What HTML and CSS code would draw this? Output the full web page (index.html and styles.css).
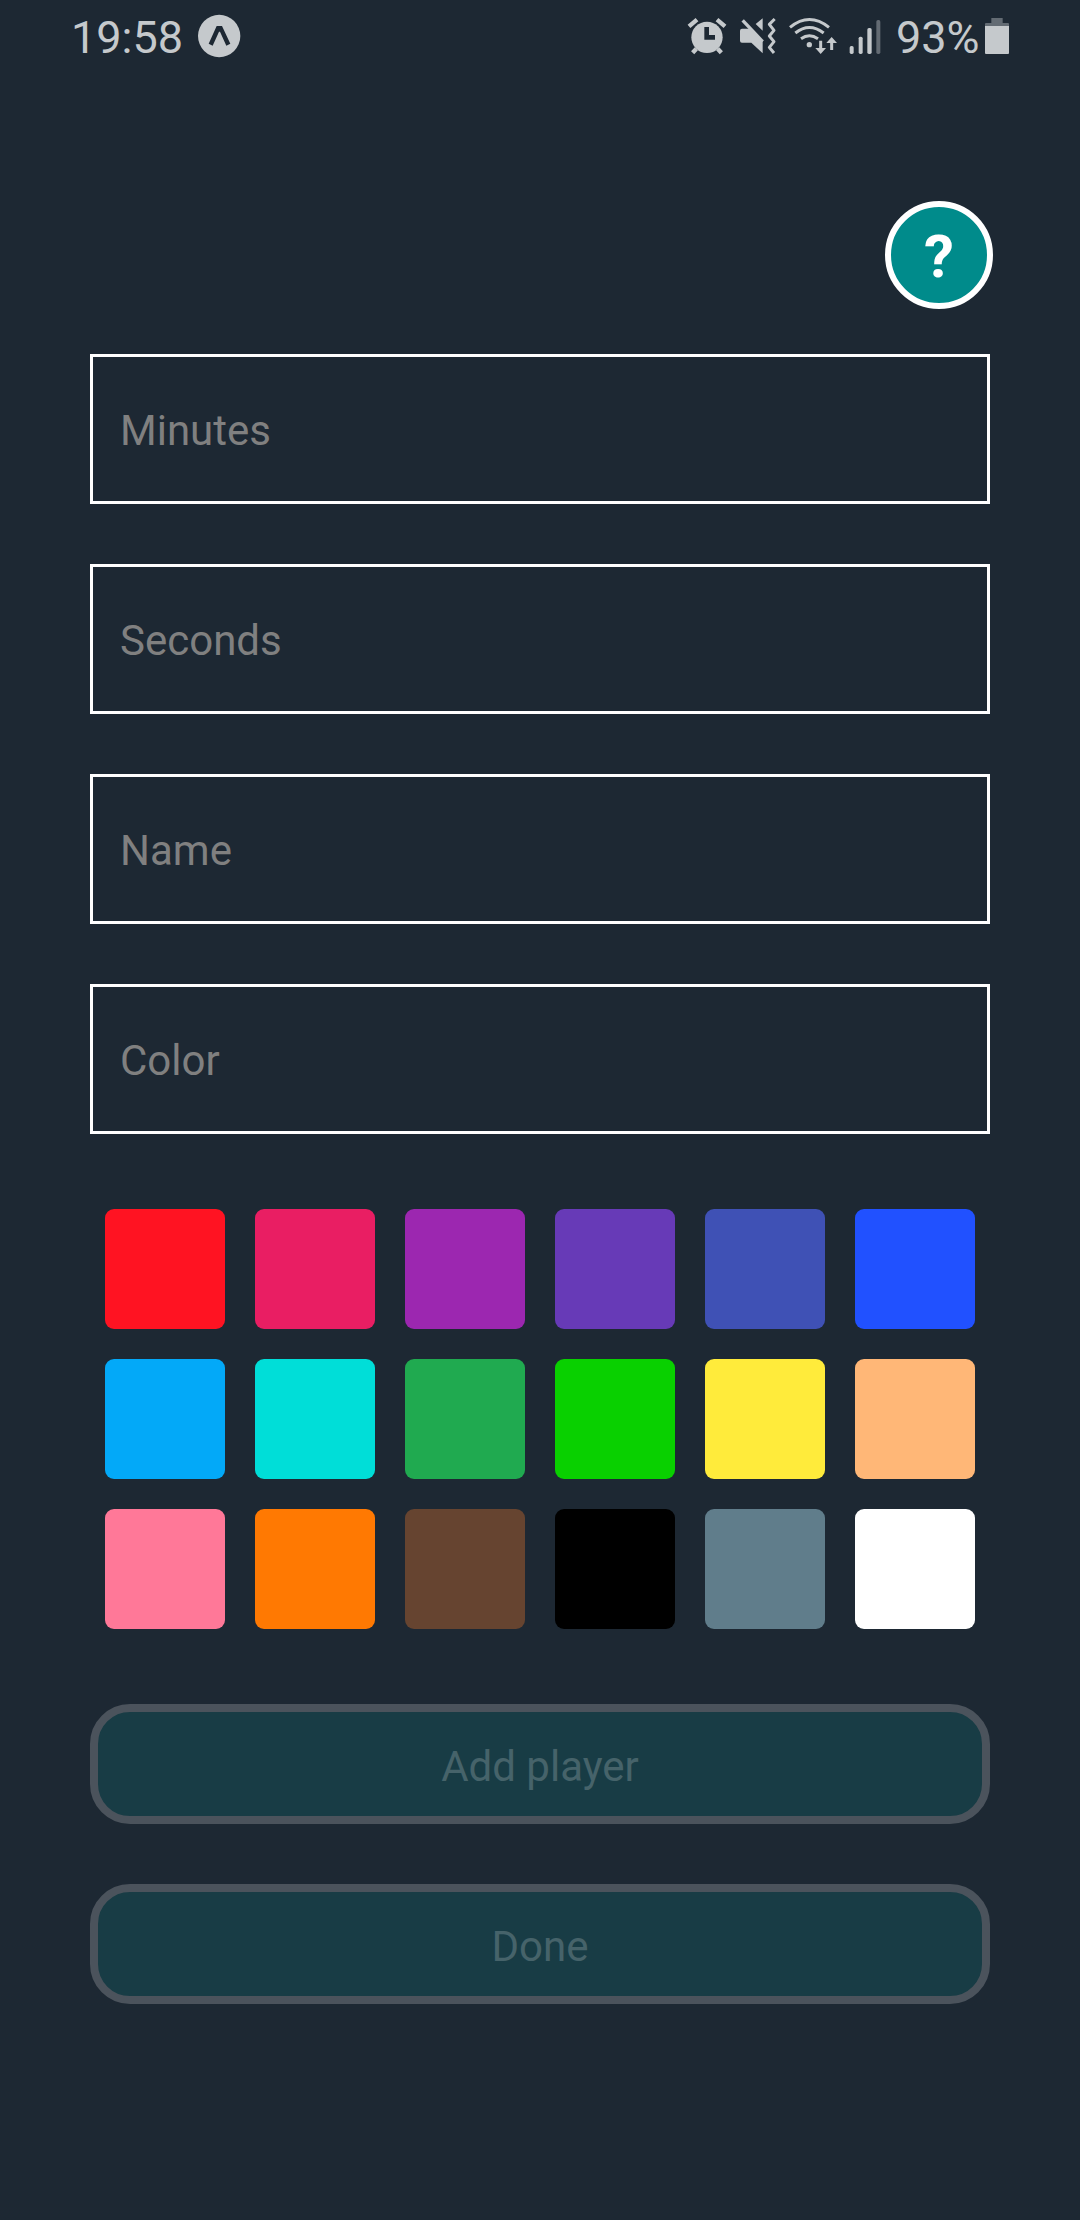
FILE: index.html
```html
<!DOCTYPE html>
<html lang="en">
<head>
<meta charset="utf-8">
<title>Add players</title>
<link rel="stylesheet" href="styles.css">
</head>
<body>
<header class="status">
  <span class="time">19:58</span>
  <svg class="app" width="44" height="75" viewBox="411 0 132 225">
    <circle cx="477.500" cy="108" r="63.500" fill="currentColor"/>
    <path class="cut" d="M470 78h16l25 53-12 6-19-42h-3l-19 42-12-6z"/>
  </svg>
  <div class="indicators">
    <svg class="alarm" width="40" height="75" viewBox="51 0 120 225">
      <circle cx="111" cy="112" r="47" fill="currentColor"/>
      <path d="M57 79l24-20M165 79l-24-20" stroke="currentColor" stroke-width="13"/>
      <path d="M79 146l-11 12M143 146l11 12" stroke="currentColor" stroke-width="13"/>
      <path class="cut" d="M103 81h14v24h18v14h-32z"/>
    </svg>
    <svg class="mute" width="38" height="75" viewBox="207 0 114 225">
      <path d="M216 86h25l37 37v37l-34-32h-28q-6 0-6-6V92q0-6 6-6zM278 55v37l-21-20z" fill="currentColor"/>
      <path d="M218 61l60 64" stroke="currentColor" stroke-width="10"/>
      <path d="M314 57l-16 16 14 18-14 17 14 17-14 17 14 17" fill="none" stroke="currentColor" stroke-width="9" stroke-linejoin="round"/>
    </svg>
    <svg class="wifi" width="50" height="75" viewBox="354 0 150 225">
      <g fill="none" stroke="currentColor" stroke-width="9">
        <path d="M360 82q58-47 117 0M376 99q42-33 85 0M393 116q25-18 51 0"/>
        <path d="M452 122v30M485 150v-30"/>
      </g>
      <circle cx="418" cy="134" r="8" fill="currentColor"/>
      <path d="M436 144h32l-16 18zM469 129h32l-16-18z" fill="currentColor"/>
    </svg>
    <svg class="signal" width="34" height="75" viewBox="24 0 102 225" fill="currentColor">
      <rect x="29" y="138" width="12" height="24" rx="5"/>
      <rect x="56" y="110" width="12" height="52" rx="5"/>
      <rect x="82" y="84" width="13" height="78" rx="5"/>
      <rect x="109" y="60" width="12" height="102" rx="5" opacity=".42"/>
    </svg>
    <span class="percent">93%</span>
    <svg class="battery" width="26" height="75" viewBox="432 0 78 225" fill="currentColor">
      <path d="M435 78v-6q0-3 3-3h16V54h34v15h16q3 0 3 3v6z" opacity=".42"/>
      <path d="M435 78h72v81q0 3-3 3h-66q-3 0-3-3z"/>
    </svg>
  </div>
</header>
<main class="screen">
  <button class="help">?</button>
  <form class="form">
    <div class="field">Minutes</div>
    <div class="field">Seconds</div>
    <div class="field">Name</div>
    <div class="field">Color</div>
  </form>
  <div class="palette">
    <i class="swatch red"></i><i class="swatch pink"></i><i class="swatch purple"></i><i class="swatch violet"></i><i class="swatch indigo"></i><i class="swatch blue"></i>
    <i class="swatch sky"></i><i class="swatch cyan"></i><i class="swatch green"></i><i class="swatch lime"></i><i class="swatch yellow"></i><i class="swatch peach"></i>
    <i class="swatch rose"></i><i class="swatch orange"></i><i class="swatch brown"></i><i class="swatch black"></i><i class="swatch slate"></i><i class="swatch white"></i>
  </div>
  <div class="actions">
    <button class="action">Add player</button>
    <button class="action">Done</button>
  </div>
</main>
</body>
</html>
```
FILE: styles.css
```css
* { box-sizing: border-box; }
body {
  margin: 0;
  min-height: 2220px;
  background: #1d2833;
  font-family: Roboto, "Liberation Sans", sans-serif;
  font-size: 42px;
}
button { font: inherit; }
svg { display: block; flex: none; }
.status {
  display: flex;
  height: 75px;
  padding: 0 70px 0 71px;
  color: #c5c9cc;
  font-size: 45px;
  line-height: 75px;
}
.time { width: 126px; }
.cut { fill: #1d2833; }
.indicators { display: flex; margin-left: auto; }
.mute { margin-left: 12px; }
.wifi { margin-left: 11px; }
.signal { margin-left: 10px; }
.percent { width: 88px; margin-left: 14px; }
.screen {
  display: flex;
  flex-direction: column;
  padding: 126px 90px 0;
}
.help {
  align-self: flex-end;
  width: 108px;
  height: 108px;
  margin: 0 -3px 45px 0;
  padding: 4px 0 0;
  border: 6px solid #fff;
  border-radius: 50%;
  background: #008b8b;
  color: #fff;
  font-size: 60px;
  font-weight: 700;
  line-height: 92px;
}
.form { display: flex; flex-direction: column; gap: 60px; }
.field {
  display: flex;
  align-items: center;
  height: 150px;
  padding: 2px 27px 0;
  border: 3px solid #fff;
  color: #808080;
}
.palette {
  display: grid;
  grid-template-columns: repeat(6, 120px);
  grid-auto-rows: 120px;
  gap: 30px;
  padding: 75px 15px;
}
.swatch { border-radius: 9px; }
.red { background: #ff1322; }
.pink { background: #e91e63; }
.purple { background: #9c27b0; }
.violet { background: #673ab7; }
.indigo { background: #3f51b5; }
.blue { background: #2151ff; }
.sky { background: #03a9f8; }
.cyan { background: #00ded8; }
.green { background: #20aa50; }
.lime { background: #09d000; }
.yellow { background: #ffeb3b; }
.peach { background: #ffb777; }
.rose { background: #ff7898; }
.orange { background: #ff7902; }
.brown { background: #664430; }
.black { background: #000; }
.slate { background: #607d8b; }
.white { background: #fff; }
.actions { display: flex; flex-direction: column; gap: 60px; }
.action {
  height: 120px;
  padding: 4px 0 0;
  border: 8px solid #4b535c;
  border-radius: 40px;
  background: #183c45;
  color: #46636a;
}
```
